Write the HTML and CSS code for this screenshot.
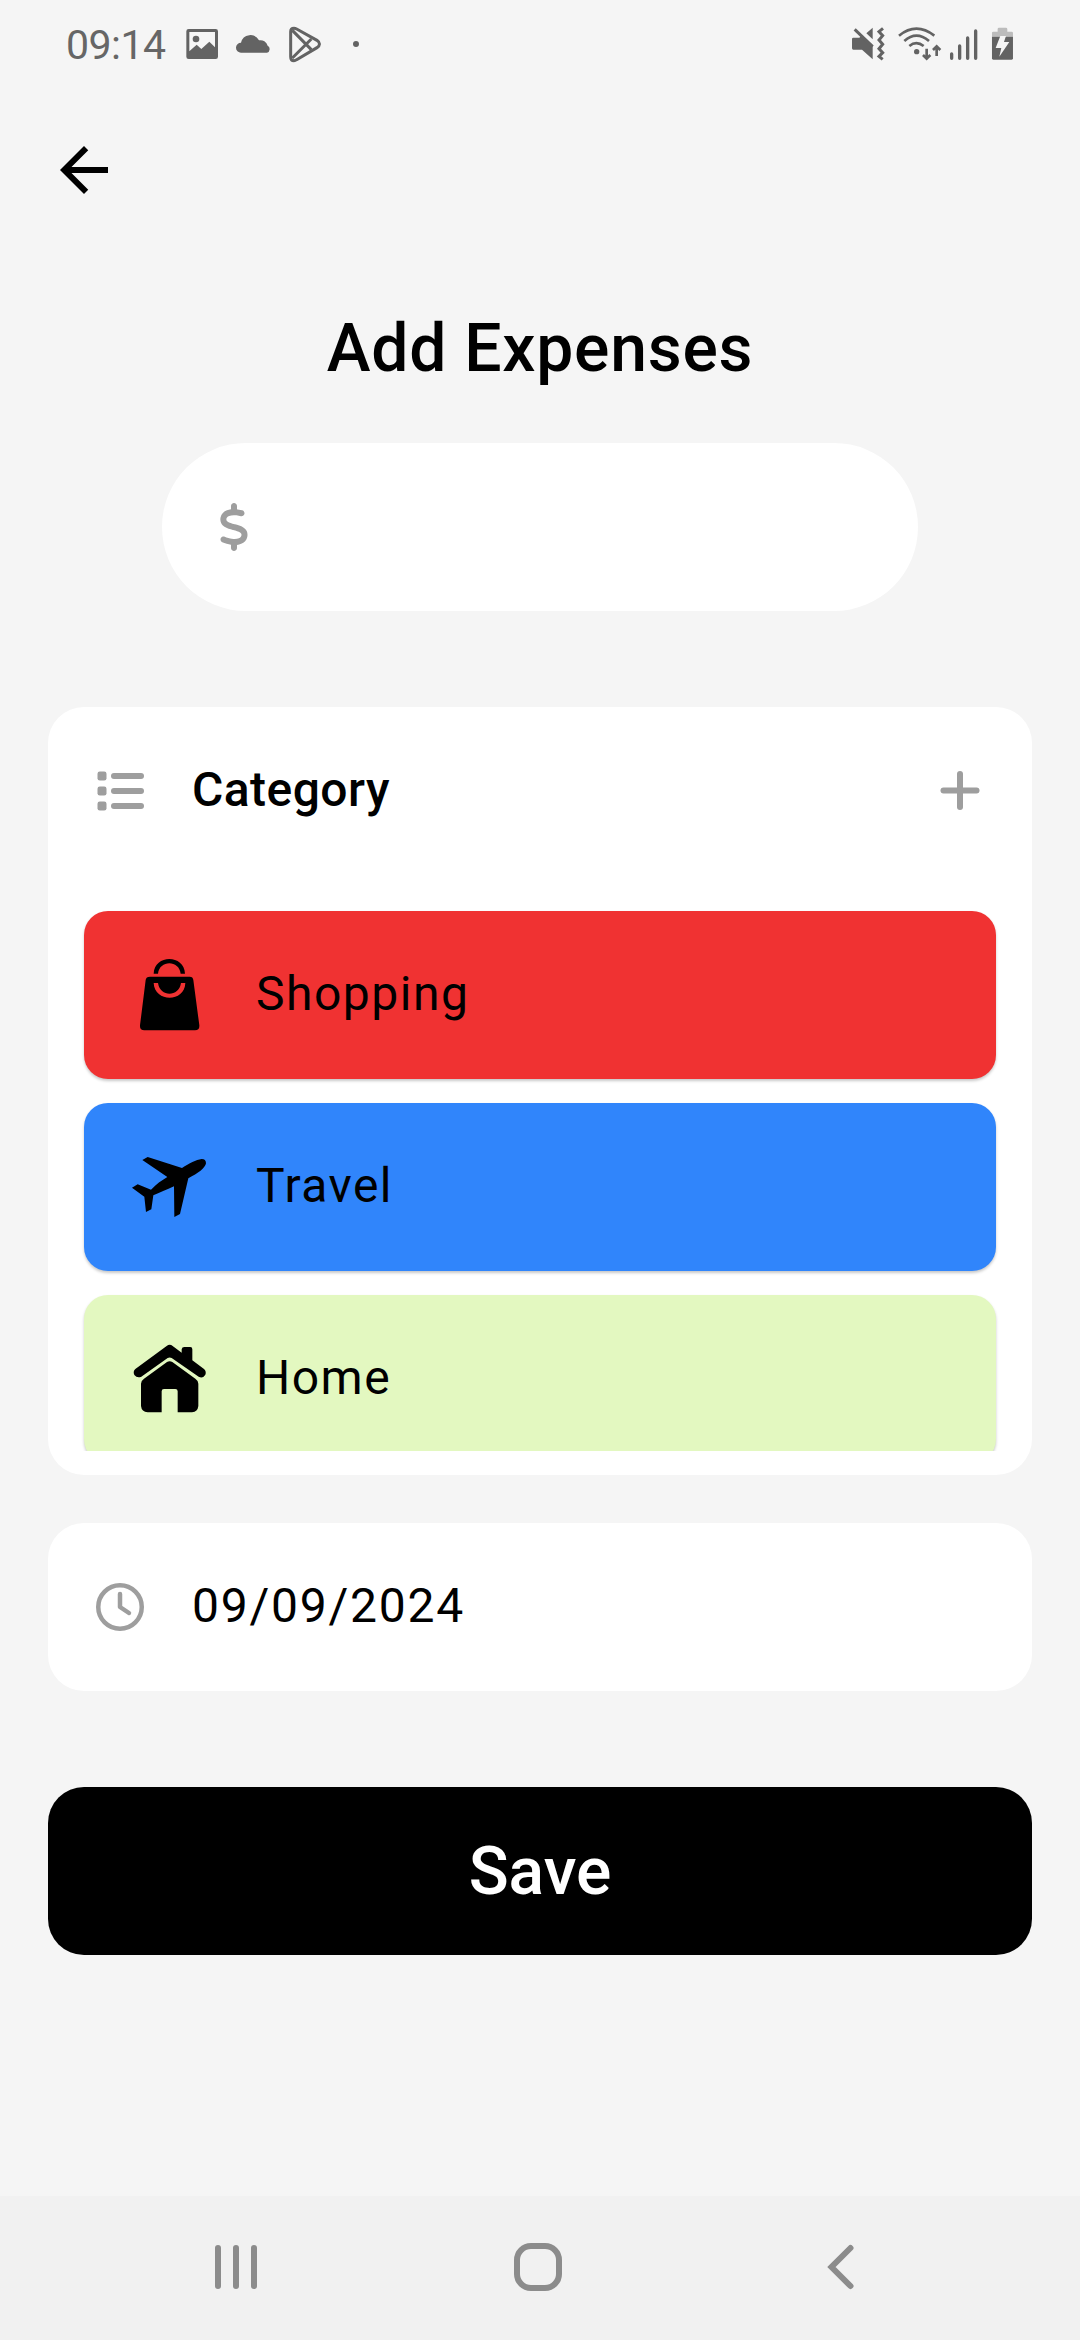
FILE: index.html
```html
<!DOCTYPE html>
<html lang="en">
<head>
<meta charset="utf-8">
<title>Add Expenses</title>
<link rel="stylesheet" href="styles.css">
</head>
<body>
<div class="screen">
  <header class="status">
    <span class="time">09:14</span>
    <svg class="notif" viewBox="420 60 560 150" aria-hidden="true">
      <path fill-rule="evenodd" d="M446 87H527Q534 87 534 94V170Q534 177 527 177H446Q439 177 439 170V94Q439 87 446 87ZM448 96V154L470 134L484 147L508 125L525 142V96Z"/>
      <circle cx="468" cy="117" r="10"/>
      <path d="M603 158A15 15 0 0 1 603 128A29 29 0 0 1 657 121A22 22 0 0 1 683 137A11.500 11.500 0 0 1 681 158Z"/>
      <g class="line">
        <path d="M752 95Q752 85 762 85Q766 85 770 87L831 121Q846 132 831 143L770 179Q766 182 762 182Q752 182 752 170Z" stroke-width="9"/>
        <path d="M757 91L814 149M757 174L814 117" stroke-width="9"/>
      </g>
      <circle cx="948" cy="132" r="9"/>
    </svg>
    <svg class="system" viewBox="90 70 500 125" aria-hidden="true">
      <path d="M100 114H118L126 107L158 136V179L126 150H100Q96 150 96 146V118Q96 114 100 114ZM139 101L158 84V119Z"/>
      <g class="line">
        <path d="M104 89L158 141" stroke-width="9"/>
        <path d="M189 86L177 96L188 108L177 121L188 134L177 147L188 159L177 170L188 179" stroke-width="9"/>
        <path d="M237 108Q289 66 343 108M253 124Q289 92 327 124M268 139Q289 122 311 139" stroke-width="8"/>
        <path d="M320 147V174M309 166L320 177L331 166M350 169V141M339 151L350 140L361 151" stroke-width="8"/>
        <path d="M395 163V176M419 139V176M443 115V176M467 94V176" stroke-width="10" stroke-linecap="round"/>
      </g>
      <circle cx="290" cy="156" r="8"/>
      <path class="faded" d="M533 88Q533 84 537 84H558Q562 84 562 88V96H575Q579 96 579 100V111H516V100Q516 96 520 96H533Z"/>
      <path d="M516 111H579V176Q579 180 575 180H520Q516 180 516 176Z"/>
      <path class="bolt" d="M541 109H558L552 127H568L538 171L544 145H527Z"/>
    </svg>
  </header>

  <nav class="appbar">
    <svg class="back" viewBox="0 0 24 24" aria-label="Back"><path d="M20 11H7.830l5.590-5.590L12 4l-8 8 8 8 1.410-1.410L7.830 13H20z"/></svg>
  </nav>

  <main class="form">
    <h1 class="title">Add Expenses</h1>

    <div class="amount">
      <svg class="dollar" viewBox="0 0 320 512" aria-label="Amount in dollars"><path d="M160 0c17.700 0 32 14.300 32 32V67.700c1.600 .2 3.100 .4 4.700 .7c.4 .1 .7 .1 1.100 .2l48 8.800c17.400 3.200 28.900 19.900 25.700 37.200s-19.900 28.900-37.200 25.700l-47.500-8.700c-31.300-4.600-58.900-1.500-78.300 6.200s-27.200 18.300-29 28.100c-2 10.700-.5 16.700 1.200 20.400c1.800 3.900 5.500 8.300 12.800 13.200c16.300 10.700 41.300 17.700 73.700 26.300l2.900 .8c28.600 7.600 63.600 16.800 89.600 33.800c14.200 9.300 27.600 21.900 35.900 39.500c8.500 17.900 10.300 37.900 6.400 59.200c-6.900 38-33.100 63.400-65.600 76.700c-13.700 5.600-28.600 9.200-44.400 11V480c0 17.700-14.300 32-32 32s-32-14.300-32-32V445.100c-.4-.1-.9-.1-1.300-.2l-.2 0 0 0c-24.400-3.800-64.500-14.300-91.500-26.300c-16.100-7.200-23.400-26.100-16.200-42.200s26.100-23.400 42.200-16.200c20.900 9.300 55.300 18.500 75.200 21.600c31.900 4.700 58.200 2 76-5.300c16.900-6.900 24.600-16.900 26.800-28.900c1.900-10.600 .4-16.700-1.300-20.400c-1.900-4-5.600-8.400-13-13.300c-16.400-10.700-41.500-17.700-74-26.300l-2.800-.7 0 0C119.400 279.300 84.400 270 58.400 253c-14.200-9.300-27.500-22-35.800-39.600c-8.400-17.900-10.100-37.900-6.100-59.200C23.700 116 52.300 91.200 84.800 78.300c13.300-5.300 27.900-8.900 43.200-11V32c0-17.700 14.300-32 32-32z"/></svg>
    </div>

    <section class="card category">
      <div class="field">
        <svg class="icon" viewBox="0 0 512 512" aria-hidden="true">
          <rect x="16" y="48" width="96" height="96" rx="24"/><rect x="160" y="64" width="352" height="64" rx="32"/>
          <rect x="16" y="208" width="96" height="96" rx="24"/><rect x="160" y="224" width="352" height="64" rx="32"/>
          <rect x="16" y="368" width="96" height="96" rx="24"/><rect x="160" y="384" width="352" height="64" rx="32"/>
        </svg>
        <span class="label strong">Category</span>
        <svg class="icon" viewBox="0 0 512 512" aria-label="New category">
          <rect x="224" y="43" width="64" height="416" rx="32"/><rect x="48" y="219" width="416" height="64" rx="32"/>
        </svg>
      </div>
      <ul class="list">
        <li class="row red">
          <svg class="pic" viewBox="261 789 252 252" aria-hidden="true">
            <path d="M341 851C343 792 433 792 435 851H422C418 809 358 809 354 851Z"/>
            <path fill-rule="evenodd" d="M330 860H449Q459 860 460 870L478 1006Q479 1021 465 1021H313Q299 1021 300 1006L317 870Q318 860 330 860ZM341 879C344 938 434 938 436 879H423C417 922 360 922 354 879Z"/>
          </svg>
          <span class="name">Shopping</span>
        </li>
        <li class="row blue">
          <svg class="pic" viewBox="171 195 252 252" aria-hidden="true">
            <path d="M217 240L233 231L336 264C358 250 378 239 395 237Q408 237 408 250C406 264 384 280 355 295L330 402L313 411L312 319C290 329 268 338 250 346L244 388L228 396L223 350L186 323L203 313L243 329C258 313 275 301 292 291Z"/>
          </svg>
          <span class="name">Travel</span>
        </li>
        <li class="row green">
          <svg class="pic" viewBox="171 771 252 252" aria-hidden="true">
            <path d="M290 798Q299 791 308 798L335 818V808Q336 801 343 801H361Q367 801 367 808V841L402 867Q410 875 406 884Q398 897 386 890L305 834Q299 831 293 834L214 890Q202 896 193 885Q188 875 196 867Z"/>
            <path d="M291 846Q299 841 307 846L376 896Q385 902 385 911V978Q383 996 366 997H323V934Q323 927 316 927H282Q275 927 275 934V997H233Q215 996 213 978V911Q213 902 222 896Z"/>
          </svg>
          <span class="name">Home</span>
        </li>
      </ul>
    </section>

    <section class="card date">
      <div class="field">
        <svg class="icon" viewBox="0 0 48 48" aria-hidden="true">
          <circle class="ring" cx="24" cy="24" r="21.750"/><path class="hand" d="M24 11V24L33 30"/>
        </svg>
        <span class="label digits">09/09/2024</span>
      </div>
    </section>

    <button class="save" type="button">Save</button>
  </main>

  <footer class="navbar">
    <svg viewBox="0 0 48 48" aria-label="Recents"><path d="M6 5V43M24 5V43M42 5V43"/></svg>
    <svg viewBox="0 0 48 48" aria-label="Home"><rect x="3" y="3" width="42" height="42" rx="14"/></svg>
    <svg viewBox="0 0 48 48" aria-label="Back"><path d="M34.500 5L15.500 24L34.500 43"/></svg>
  </footer>
</div>
</body>
</html>
```

FILE: styles.css
```css
* { box-sizing: border-box; }

body {
  margin: 0;
  background: #f5f5f5;
  color: #000;
  font-family: Roboto, "Liberation Sans", sans-serif;
}

svg { display: block; flex: none; }

.screen {
  width: 1080px;
  height: 2340px;
  display: flex;
  flex-direction: column;
}

/* System status bar */
.status {
  height: 90px;
  padding: 0 60px 0 66px;
  display: flex;
  align-items: flex-start;
  color: #666;
}
.status svg { fill: #636363; }
.status .line { fill: none; stroke: #636363; }
.status .faded { fill: #bcbcbc; }
.status .bolt { fill: #f5f5f5; }
.time { width: 114px; font-size: 41px; line-height: 48px; margin-top: 21px; letter-spacing: -0.5px; }
.notif { width: 186.670px; height: 50px; margin-top: 20px; }
.system { width: 166.670px; height: 41.670px; margin: 23.330px 3.330px 0 auto; }

.appbar { height: 194px; padding: 44px 48px 0; }
.back { width: 72px; height: 72px; }

/* Expense form */
.form {
  flex: 1;
  padding: 0 48px;
  display: flex;
  flex-direction: column;
}
.title {
  margin: 21px 0 0;
  height: 138px;
  text-align: center;
  font-size: 66px;
  font-weight: 500;
  line-height: 88px;
  letter-spacing: 0.750px;
}
.amount {
  width: 756px;
  height: 168px;
  margin: 0 auto 96px;
  padding-left: 57px;
  display: flex;
  align-items: center;
  border-radius: 84px;
  background: #fff;
}
.dollar { width: 30px; height: 48px; fill: #9e9e9e; }

.card { border-radius: 36px; background: #fff; }
.field {
  height: 168px;
  padding: 0 48px;
  display: flex;
  align-items: center;
  gap: 48px;
}
.icon { width: 48px; height: 48px; fill: #9e9e9e; }
.ring, .hand { fill: none; stroke: #9e9e9e; stroke-width: 4.500px; stroke-linecap: round; stroke-linejoin: round; }
.label { flex: 1; padding-bottom: 3px; font-size: 48px; line-height: 72px; letter-spacing: 1.500px; }
.strong { font-weight: 500; letter-spacing: 0.450px; }
.digits { letter-spacing: 1.750px; }

.category { height: 768px; margin-bottom: 48px; }
.list {
  height: 576px;
  margin: 0;
  padding: 36px 36px 0;
  overflow: hidden;
  list-style: none;
}
.row {
  height: 168px;
  margin-bottom: 24px;
  padding-left: 43px;
  display: flex;
  align-items: center;
  gap: 45px;
  border-radius: 24px;
  box-shadow: 0 2px 3px rgba(0, 0, 0, 0.220);
  font-size: 48px;
  line-height: 72px;
  letter-spacing: 1.500px;
}
.name { padding-bottom: 3px; }
.pic { width: 84px; height: 84px; }
.red { background: #f03232; }
.blue { background: #3085fb; }
.green { background: #e3f8c0; }

.date { margin-bottom: 96px; }
.save {
  height: 168px;
  padding: 2px 0 0;
  border: 0;
  border-radius: 36px;
  background: #000;
  color: #fff;
  font: 500 66px/88px Roboto, "Liberation Sans", sans-serif;
}

/* System navigation bar */
.navbar {
  height: 144px;
  padding: 0 216px 2px 212px;
  display: flex;
  align-items: center;
  justify-content: space-between;
  background: #f1f1f1;
}
.navbar svg {
  width: 48px;
  height: 48px;
  fill: none;
  stroke: #8c8c8c;
  stroke-width: 6px;
  stroke-linecap: round;
}
```
